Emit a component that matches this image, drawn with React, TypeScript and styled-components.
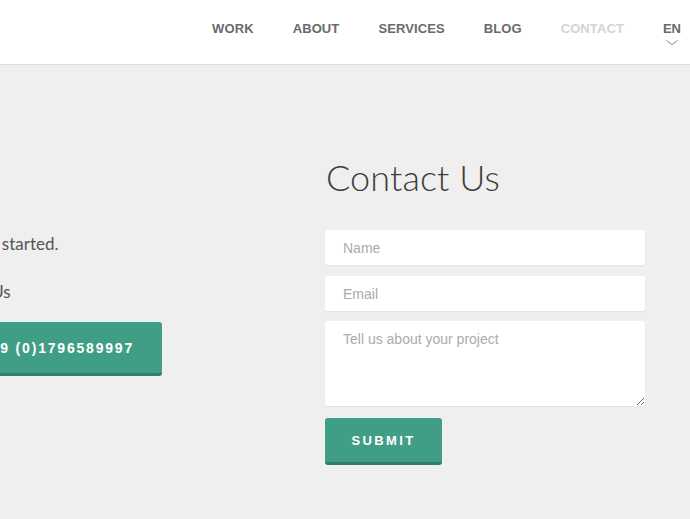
import React from "react";
import styled, { createGlobalStyle } from "styled-components";

const Global = createGlobalStyle`
  html, body { margin: 0; padding: 0; background: #efefef; overflow: hidden; }
  body { font-family: "Lato", "Liberation Sans", sans-serif; }
  * { box-sizing: border-box; }
`;

const Header = styled.header`
  height: 65px;
  background: #fff;
  border-bottom: 1px solid #dedede;
  display: flex;
  justify-content: flex-end;
  align-items: flex-start;
  padding-right: 9px;
`;

const Nav = styled.nav`
  display: flex;
  gap: 39px;
  padding-top: 21px;
`;

const NavLink = styled.a<{ $active?: boolean }>`
  font-family: "Liberation Sans", Arial, sans-serif;
  font-weight: 700;
  font-size: 13px;
  line-height: 15px;
  color: ${(p) => (p.$active ? "#d4d4d4" : "#6a6a6a")};
  text-decoration: none;
  letter-spacing: 0.1px;
`;

const Lang = styled.div`
  display: flex;
  flex-direction: column;
  align-items: center;
  font-family: "Liberation Sans", Arial, sans-serif;
  font-weight: 700;
  font-size: 13px;
  line-height: 15px;
  color: #6a6a6a;
  gap: 4px;
`;

const Main = styled.main`
  display: flex;
  padding-top: 90px;
  min-height: calc(100vh - 65px);
`;

const LeftCol = styled.section`
  width: 421px;
  flex-shrink: 0;
  margin-left: -96px;
  padding-top: 78px;
  display: flex;
  flex-direction: column;
  align-items: flex-start;
`;

const Lead = styled.p<{ $gap: number }>`
  margin: 0 0 ${(p) => p.$gap}px;
  font-size: 17px;
  line-height: 22px;
  color: #555;
  white-space: nowrap;
`;

const Button = styled.button<{ $spacing: number; $size: number }>`
  font-family: "Liberation Sans", Arial, sans-serif;
  font-weight: 700;
  font-size: ${(p) => p.$size}px;
  letter-spacing: ${(p) => p.$spacing}px;
  color: #fff;
  background: #3f9e85;
  border: none;
  border-bottom: 3px solid #2f7f69;
  border-radius: 3px;
  cursor: pointer;
  white-space: nowrap;
`;

const PhoneButton = styled(Button)`
  width: 258px;
  height: 54px;
  padding: 0 28px 0 0;
  text-align: right;
`;

const RightCol = styled.section`
  width: 320px;
  display: flex;
  flex-direction: column;
`;

const Title = styled.h1`
  margin: 0 0 31px 1px;
  font-weight: 300;
  font-size: 36px;
  line-height: 44px;
  color: #3d3d3d;
  letter-spacing: 0.1px;
`;

const Form = styled.form`
  display: flex;
  flex-direction: column;
  gap: 11px;
  align-items: flex-start;
`;

const fieldCss = `
  width: 320px;
  border: none;
  border-radius: 3px;
  background: #fff;
  box-shadow: 0 1px 1px rgba(0,0,0,0.05);
  font-family: "Liberation Sans", Arial, sans-serif;
  font-size: 14px;
  color: #444;
  padding: 0 18px;
  outline: none;
  &::placeholder { color: #ababab; }
`;

const Input = styled.input`
  ${fieldCss}
  height: 35px;
`;

const TextArea = styled.textarea`
  ${fieldCss}
  height: 85px;
  margin-top: -1px;
  padding-top: 10px;
  resize: vertical;
`;

const SubmitButton = styled(Button)`
  width: 117px;
  height: 47px;
  margin-top: 1px;
  padding: 0;
`;

export default function App() {
  return (
    <>
      <Global />
      <Header>
        <Nav>
          <NavLink href="#">WORK</NavLink>
          <NavLink href="#">ABOUT</NavLink>
          <NavLink href="#">SERVICES</NavLink>
          <NavLink href="#">BLOG</NavLink>
          <NavLink href="#" $active>CONTACT</NavLink>
          <Lang>
            EN
            <svg width="12" height="5" viewBox="0 0 12 5" fill="none">
              <path d="M0.5 0.5 L6 4.5 L11.5 0.5" stroke="#8a8a8a" strokeWidth="1" />
            </svg>
          </Lang>
        </Nav>
      </Header>
      <Main>
        <LeftCol>
          <Lead $gap={26}>Ready to get started.</Lead>
          <Lead $gap={19}>Or just Call Us</Lead>
          <PhoneButton type="button" $size={14} $spacing={1.8}>+49 (0)1796589997</PhoneButton>
        </LeftCol>
        <RightCol>
          <Title>Contact Us</Title>
          <Form>
            <Input placeholder="Name" />
            <Input placeholder="Email" />
            <TextArea placeholder="Tell us about your project" />
            <SubmitButton type="button" $size={13} $spacing={2.4}>SUBMIT</SubmitButton>
          </Form>
        </RightCol>
      </Main>
    </>
  );
}
